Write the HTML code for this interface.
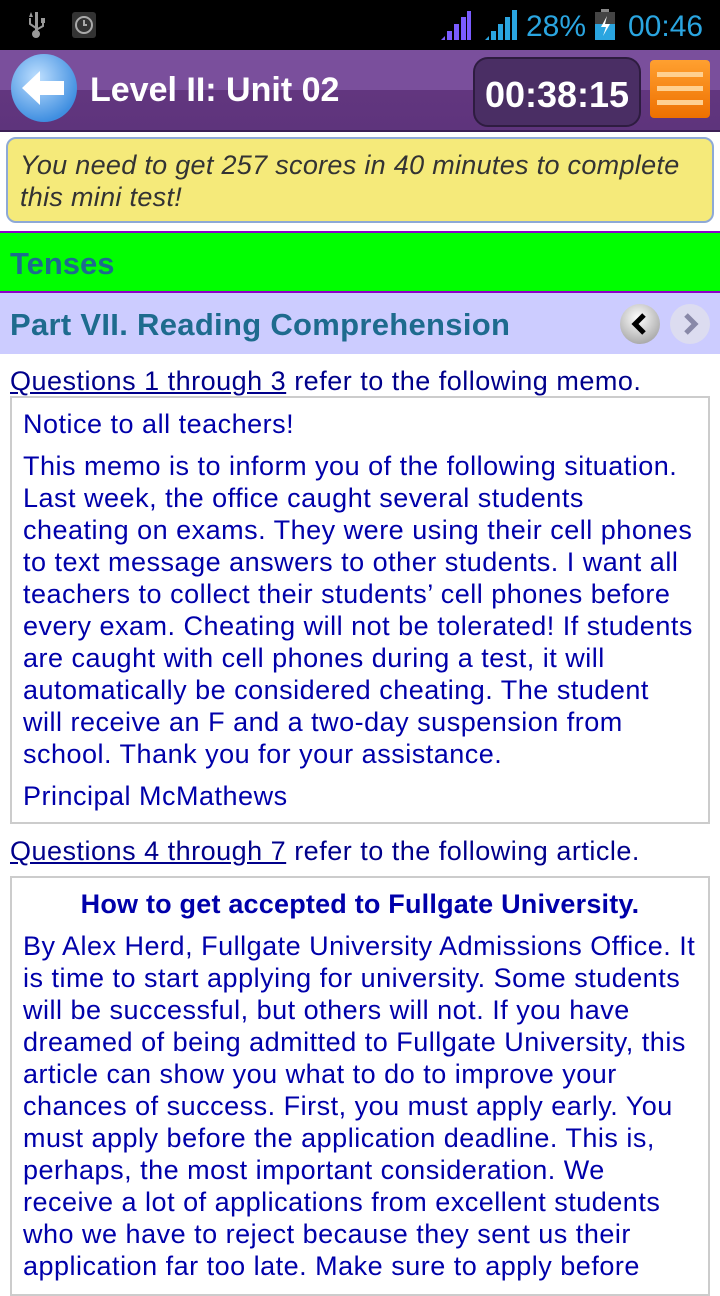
<!DOCTYPE html>
<html><head><meta charset="utf-8"><style>
*{margin:0;padding:0;box-sizing:border-box}
body{width:720px;height:1280px;overflow:hidden;background:#fff;font-family:"Liberation Sans",sans-serif;position:relative}
.sb{position:absolute;top:0;left:0;width:720px;height:50px;background:#000}
.hdr{position:absolute;top:50px;left:0;width:720px;height:82px;background:linear-gradient(#7a4f9c 0,#7a4f9c 50%,#62367f 50%,#5e347c 100%);border-bottom:2px solid #3b1f55}
.note{position:absolute;top:137px;left:6px;width:708px;height:86px;background:#f5ea7a;border:2px solid #8ea9d6;border-radius:10px;font-style:italic;font-size:27px;color:#333;padding:10px 12px;line-height:32px;letter-spacing:0.3px;white-space:nowrap}
.tenses{position:absolute;top:231px;left:0;width:720px;height:62px;background:#00ff00;border-top:2px solid #8b00c8;border-bottom:2px solid #8b00c8;color:#1e6b8e;font-weight:bold;font-size:31px;padding:13px 10px}
.part{position:absolute;top:293px;left:0;width:720px;height:61px;background:#ccccff;color:#1e6b8e;font-weight:bold;font-size:31px;padding:14px 10px;letter-spacing:0.3px}
.q{position:absolute;left:10px;font-size:27px;color:#00008b;letter-spacing:0.5px;white-space:nowrap}
.q u{color:#00008b}
.box{position:absolute;left:10px;width:700px;border:2px solid #ccc;color:#0000aa;font-size:27px;line-height:32px;padding:10px 11px 8px;white-space:nowrap;letter-spacing:0.5px;overflow:hidden}
.box p{margin-bottom:10px}
</style></head><body>
<div class="sb">
<svg width="720" height="50" style="position:absolute;top:0;left:0">
<g fill="#999"><rect x="35" y="12" width="3" height="22"/><circle cx="36" cy="34" r="4"/><path d="M29 17l2 -5 2 5zM41 18h4v5h-4z"/><path d="M30 18v6l6 4M43 22v4l-7 4" stroke="#999" stroke-width="2" fill="none"/></g>
<g><rect x="72" y="12" width="24" height="26" rx="3" fill="#333"/><circle cx="84" cy="25" r="8" fill="none" stroke="#aaa" stroke-width="2"/><path d="M84 20v5h3" stroke="#aaa" stroke-width="2" fill="none"/></g>
<g fill="#7a5cff"><path d="M441 40l4-4v4z"/><rect x="447" y="31" width="5" height="9"/><rect x="454" y="24" width="5" height="16"/><rect x="461" y="17" width="5" height="23"/><rect x="467" y="11" width="4" height="29"/></g>
<g fill="#2aa5e0"><path d="M485 40l4-4v4z"/><rect x="491" y="31" width="5" height="9"/><rect x="498" y="24" width="5" height="16"/><rect x="505" y="17" width="5" height="23"/><rect x="512" y="10" width="5" height="30"/></g>
<rect x="595" y="12" width="20" height="28" fill="#2aa5e0"/><rect x="601" y="9" width="8" height="4" fill="#888"/><rect x="595" y="12" width="20" height="12" fill="#444"/>
<path d="M607 16l-6 11h5l-3 9 7-12h-5z" fill="#fff"/>
<text x="526" y="36" font-family="Liberation Sans" font-size="30" fill="#2aa5e0">28%</text>
<text x="628" y="36" font-family="Liberation Sans" font-size="30" fill="#2aa5e0">00:46</text>
</svg></div>
<div class="hdr">
<svg width="720" height="82" style="position:absolute;top:0;left:0">
<defs><radialGradient id="g" cx="40%" cy="35%" r="65%"><stop offset="0" stop-color="#bfe0ff"/><stop offset="1" stop-color="#3f8ee0"/></radialGradient>
<linearGradient id="o" x1="0" y1="0" x2="0" y2="1"><stop offset="0" stop-color="#ffa030"/><stop offset="1" stop-color="#ee7000"/></linearGradient></defs>
<ellipse cx="44" cy="38" rx="33" ry="34" fill="url(#g)"/>
<path d="M22 38L40 21V31H64V45H40V55Z" fill="#fff"/>
<text x="90" y="51" font-family="Liberation Sans" font-weight="bold" font-size="34" fill="#fff">Level II: Unit 02</text>
<rect x="474" y="8" width="166" height="68" rx="14" fill="#4a2e64" stroke="#2e1c40" stroke-width="2"/>
<text x="557" y="57" text-anchor="middle" font-family="Liberation Sans" font-weight="bold" font-size="36" fill="#fff">00:38:15</text>
<rect x="650" y="10" width="60" height="58" rx="4" fill="url(#o)"/>
<rect x="657" y="22" width="46" height="5" fill="#ffd090"/><rect x="657" y="36" width="46" height="5" fill="#ffd090"/><rect x="657" y="50" width="46" height="5" fill="#ffd090"/>
</svg></div>
<div class="note">You need to get 257 scores in 40 minutes to complete<br>this mini test!</div>
<div class="tenses">Tenses</div>
<div class="part">Part VII. Reading Comprehension
<svg width="100" height="50" style="position:absolute;left:615px;top:6px">
<defs><radialGradient id="b" cx="45%" cy="35%" r="65%"><stop offset="0" stop-color="#fff"/><stop offset="1" stop-color="#aaa"/></radialGradient></defs>
<circle cx="25" cy="25" r="20" fill="url(#b)"/><path d="M29 16l-9 9 9 9" stroke="#000" stroke-width="5" fill="none"/>
<circle cx="75" cy="25" r="20" fill="#dcdcf0"/><path d="M71 16l9 9-9 9" stroke="#8888a8" stroke-width="5" fill="none"/>
</svg></div>
<div class="q" style="top:366px"><u>Questions 1 through 3</u> refer to the following memo.</div>
<div class="box" style="top:396px;height:428px">
<p>Notice to all teachers!</p>
<p>This memo is to inform you of the following situation.<br>Last week, the office caught several students<br>cheating on exams. They were using their cell phones<br>to text message answers to other students. I want all<br>teachers to collect their students’ cell phones before<br>every exam. Cheating will not be tolerated! If students<br>are caught with cell phones during a test, it will<br>automatically be considered cheating. The student<br>will receive an F and a two-day suspension from<br>school. Thank you for your assistance.</p>
<p>Principal McMathews</p>
</div>
<div class="q" style="top:836px"><u>Questions 4 through 7</u> refer to the following article.</div>
<div class="box" style="top:876px;height:420px">
<p style="text-align:center;font-weight:bold;letter-spacing:0.2px">How to get accepted to Fullgate University.</p>
<p>By Alex Herd, Fullgate University Admissions Office. It<br>is time to start applying for university. Some students<br>will be successful, but others will not. If you have<br>dreamed of being admitted to Fullgate University, this<br>article can show you what to do to improve your<br>chances of success. First, you must apply early. You<br>must apply before the application deadline. This is,<br>perhaps, the most important consideration. We<br>receive a lot of applications from excellent students<br>who we have to reject because they sent us their<br>application far too late. Make sure to apply before</p>
</div>
</body></html>
